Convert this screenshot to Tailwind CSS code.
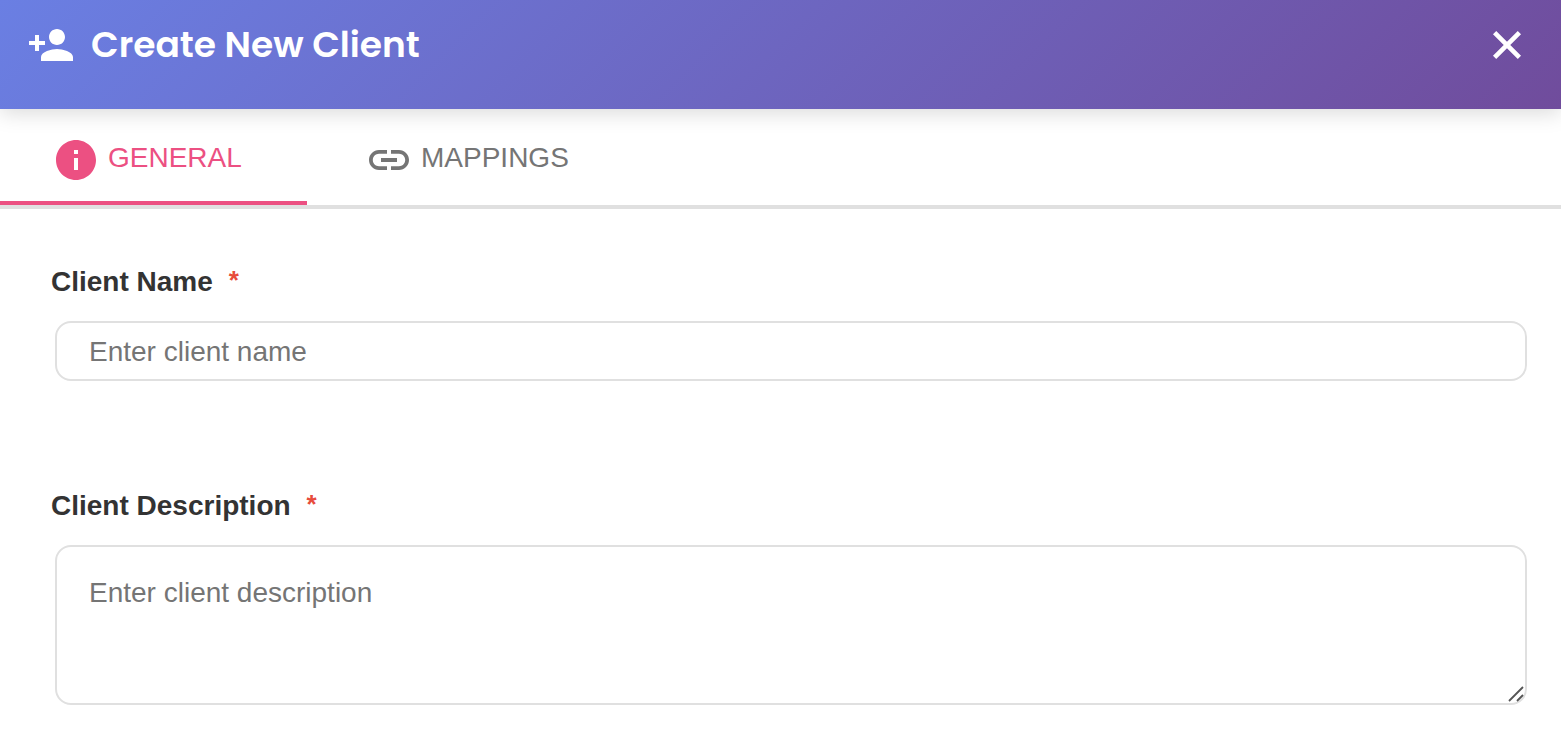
<!DOCTYPE html>
<html lang="en">
<head>
    <meta charset="UTF-8">
    <meta name="viewport" content="width=device-width, initial-scale=1.0">
    <title>Create New Client</title>

    <script src="https://cdn.jsdelivr.net/npm/@tailwindcss/browser@4"></script>
</head>

<body class="bg-white text-[28px] font-['Helvetica','Liberation_Sans',sans-serif]">

<!-- Header -->
<header class="relative flex items-start justify-between bg-linear-[135deg,#6a7fe3,#704c9c] pt-[21px] pb-10 pl-[27px] pr-[30px] text-white shadow-[0_4px_20px_rgba(0,0,0,0.15)]">
    <div class="flex items-center gap-4">
        <svg class="size-12" viewBox="0 0 24 24" fill="currentColor" aria-hidden="true">
            <path d="M15 12c2.21 0 4-1.79 4-4s-1.79-4-4-4-4 1.79-4 4 1.79 4 4 4zm-9-2V7H4v3H1v2h3v3h2v-3h3v-2H6zm9 4c-2.67 0-8 1.34-8 4v2h16v-2c0-2.66-5.33-4-8-4z"/>
        </svg>
        <h1 class="text-[36px] leading-12 font-semibold font-['Poppins','Inter',sans-serif]">Create New Client</h1>
    </div>
    <button type="button" aria-label="Close" class="flex size-12 items-center justify-center">
        <svg class="size-8" viewBox="0 0 32 32" fill="none" stroke="currentColor" stroke-width="4.6" aria-hidden="true">
            <path d="M3.6 3.6l24.8 24.8M28.4 3.6L3.6 28.4"/>
        </svg>
    </button>
</header>

<!-- Tabs -->
<nav class="flex gap-[6px] border-b-4 border-[#e0e0e0]">
    <a href="#general" class="flex min-w-[307px] items-center gap-2 border-b-4 border-[#ec5082] pt-[23px] pb-[17px] pl-[52px] text-[#ec5082]">
        <svg class="mt-1 size-12" viewBox="0 0 24 24" fill="currentColor" aria-hidden="true">
            <path d="M12 2C6.48 2 2 6.48 2 12s4.48 10 10 10 10-4.48 10-10S17.52 2 12 2zm1 15h-2v-6h2v6zm0-8h-2V7h2v2z"/>
        </svg>
        <span>GENERAL</span>
    </a>
    <a href="#mappings" class="flex items-center gap-2 border-b-4 border-transparent pt-[23px] pb-[17px] pl-[52px] pr-16 text-[#757575]">
        <svg class="mt-1 size-12" viewBox="0 0 24 24" fill="currentColor" aria-hidden="true">
            <path d="M3.9 12c0-1.71 1.39-3.1 3.1-3.1h4V7H7c-2.76 0-5 2.24-5 5s2.24 5 5 5h4v-1.9H7c-1.71 0-3.1-1.39-3.1-3.1zM8 13h8v-2H8v2zm9-6h-4v1.9h4c1.71 0 3.1 1.39 3.1 3.1s-1.39 3.1-3.1 3.1h-4V17h4c2.76 0 5-2.24 5-5s-2.24-5-5-5z"/>
        </svg>
        <span>MAPPINGS</span>
    </a>
</nav>

<!-- Form -->
<form id="general" class="flex flex-col gap-[105px] pt-[53px] pb-8 pl-[51px] pr-[34px]">
    <div>
        <label for="name" class="flex gap-4 leading-10 font-bold text-[#333333]">Client Name <span class="text-[26px] leading-9 text-[#e74c3c]">*</span></label>
        <div class="mt-[19px] pl-1">
            <input type="text" id="name" name="name" required placeholder="Enter client name"
                   class="block h-[60px] w-full rounded-2xl border-2 border-[#e0e0e0] px-8 pt-0.5 placeholder:text-[#757575]">
        </div>
    </div>
    <div>
        <label for="description" class="flex gap-4 leading-10 font-bold text-[#333333]">Client Description <span class="text-[26px] leading-9 text-[#e74c3c]">*</span></label>
        <div class="relative mt-[19px] ml-1">
            <textarea id="description" name="description" required placeholder="Enter client description"
                      class="block h-40 w-full resize-none rounded-2xl border-2 border-[#e0e0e0] px-8 py-[30px] leading-8 placeholder:text-[#757575]"></textarea>
            <svg class="pointer-events-none absolute right-[3px] bottom-[3px] size-4" viewBox="0 0 16 16" fill="none" stroke="#555555" stroke-width="1.8" aria-hidden="true">
                <path d="M1 15L15 1M9 15l6-6"/>
            </svg>
        </div>
    </div>
</form>

</body>
</html>
